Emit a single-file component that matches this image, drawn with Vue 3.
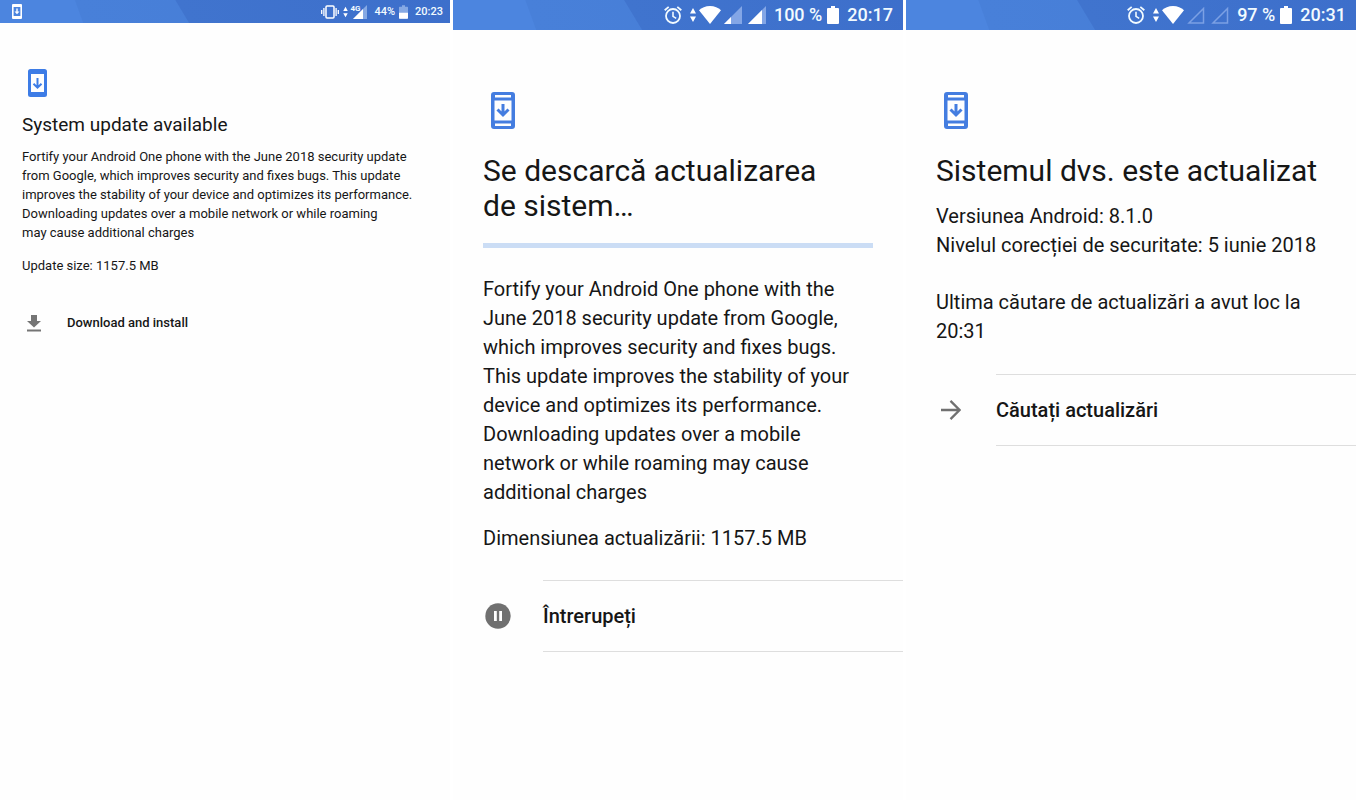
<script setup>
const screens = [
  {
    id: 'available',
    lang: 'en',
    compact: true,
    battery: '44%',
    time: '20:23',
    title: ['System update available'],
    paragraphs: [
      [
        'Fortify your Android One phone with the June 2018 security update',
        'from Google, which improves security and fixes bugs. This update',
        'improves the stability of your device and optimizes its performance.',
        'Downloading updates over a mobile network or while roaming',
        'may cause additional charges',
      ],
      ['Update size: 1157.5 MB'],
    ],
    action: 'Download and install',
    icon: 'download',
  },
  {
    id: 'downloading',
    lang: 'ro',
    battery: '100 %',
    time: '20:17',
    signal: 'partial',
    title: ['Se descarcă actualizarea', 'de sistem…'],
    progress: true,
    paragraphs: [
      [
        'Fortify your Android One phone with the',
        'June 2018 security update from Google,',
        'which improves security and fixes bugs.',
        'This update improves the stability of your',
        'device and optimizes its performance.',
        'Downloading updates over a mobile',
        'network or while roaming may cause',
        'additional charges',
      ],
      ['Dimensiunea actualizării: 1157.5 MB'],
    ],
    action: 'Întrerupeți',
    icon: 'pause',
  },
  {
    id: 'updated',
    lang: 'ro',
    battery: '97 %',
    time: '20:31',
    signal: 'empty',
    title: ['Sistemul dvs. este actualizat'],
    paragraphs: [
      ['Versiunea Android: 8.1.0', 'Nivelul corecției de securitate: 5 iunie 2018'],
      ['Ultima căutare de actualizări a avut loc la', '20:31'],
    ],
    action: 'Căutați actualizări',
    icon: 'arrow',
  },
]
</script>

<template>
  <main class="screens">
    <section v-for="s in screens" :key="s.id" :lang="s.lang" class="screen" :class="[s.id, { compact: s.compact }]">
      <header class="status">
        <template v-if="s.compact">
          <svg class="notice" viewBox="0 0 10 15" aria-hidden="true">
            <path fill="#fff" fill-rule="evenodd" d="M1 0h8a1 1 0 0 1 1 1v13a1 1 0 0 1-1 1H1a1 1 0 0 1-1-1V1a1 1 0 0 1 1-1zM1.6 3v9h6.8V3z" />
            <path fill="#fff" d="M4.3 4.5h1.4v3h1.8L5 10.2 2.5 7.5h1.8z" />
          </svg>
          <svg class="vibrate" viewBox="0 0 18 14" aria-hidden="true">
            <rect x="5" y="1" width="8" height="12" rx="1" fill="none" stroke="#fff" stroke-width="1.5" />
            <path d="M2.9 3v8M.7 5v4M15.1 3v8M17.3 5v4" stroke="#fff" stroke-width="1.3" />
          </svg>
          <svg class="traffic" viewBox="0 0 6 16" aria-hidden="true">
            <path fill="#fff" d="M0 6.5 3 1l3 5.5zM0 9.5h6L3 15z" />
          </svg>
          <span class="network">
            <svg viewBox="0 0 17 14" aria-hidden="true">
              <path fill="#86a9e4" d="M17 0v14H3z" />
              <path fill="#fff" d="M13 4v10H3z" />
            </svg>
            <span class="generation">4G</span>
          </span>
        </template>
        <template v-else>
          <svg class="alarm" viewBox="0 0 18 18" aria-hidden="true" fill="none" stroke="#f2fbff">
            <circle cx="9" cy="10" r="7" stroke-width="1.8" />
            <path d="M9 5.8V10.4l3.2 2" stroke-width="1.6" />
            <path d="M.7 4.3 4.7.9M17.3 4.3 13.3.9" stroke-width="1.8" />
          </svg>
          <svg class="traffic" viewBox="0 0 6 16" aria-hidden="true">
            <path fill="#fff" d="M0 6.5 3 1l3 5.5zM0 9.5h6L3 15z" />
          </svg>
          <svg class="wifi" viewBox="0 0 22 18" aria-hidden="true">
            <path fill="#fff" d="M11 18 0 4.2C2.7 1.8 6.5 0 11 0s8.3 1.8 11 4.2z" />
          </svg>
          <svg v-for="n in 2" :key="n" class="signal" viewBox="0 0 18 18" aria-hidden="true">
            <path v-if="s.signal === 'empty'" d="M16.5 2.5v14.500H2z" fill="none" stroke="#7ba0e4" stroke-width="1.5" />
            <template v-else>
              <path fill="#83a6e6" d="M18 0v18H0z" />
              <path fill="#fff" :d="n === 1 ? 'M7 11v7H0z' : 'M14 4v14H0z'" />
            </template>
          </svg>
        </template>
        <span class="level">{{ s.battery }}</span>
        <svg class="battery" viewBox="0 0 12 18" aria-hidden="true">
          <path :fill="s.compact ? '#86a9e4' : '#fff'" d="M4 0h4v2h3a1 1 0 0 1 1 1v14a1 1 0 0 1-1 1H1a1 1 0 0 1-1-1V3a1 1 0 0 1 1-1h3z" />
          <path v-if="s.compact" fill="#fff" d="M0 10h12v7a1 1 0 0 1-1 1H1a1 1 0 0 1-1-1z" />
        </svg>
        <time>{{ s.time }}</time>
      </header>

      <div class="content">
        <svg v-if="s.compact" class="device" viewBox="0 0 19 28" aria-hidden="true">
          <path fill="#3d7ce6" fill-rule="evenodd" d="M2.5 0h14A2.5 2.5 0 0 1 19 2.5v23a2.5 2.5 0 0 1-2.5 2.5h-14A2.5 2.5 0 0 1 0 25.5v-23A2.5 2.5 0 0 1 2.5 0zM3 5v18h13V5z" />
          <path fill="none" stroke="#3d7ce6" stroke-width="2" d="M9.5 9v10M5.5 14.7l4 4 4-4" />
        </svg>
        <svg v-else class="device" viewBox="0 0 24 37" aria-hidden="true">
          <path fill="#447de0" fill-rule="evenodd" d="M3 0h18a3 3 0 0 1 3 3v31a3 3 0 0 1-3 3H3a3 3 0 0 1-3-3V3a3 3 0 0 1 3-3zM4 3v2.500h16V3zM3.500 8.500v20h17v-20zM4 31.500V34h16v-2.500z" />
          <path fill="none" stroke="#447de0" stroke-width="3" d="M12 12v11M6.5 17.500l5.500 5.500 5.500-5.500" />
        </svg>

        <h1><template v-for="(line, i) in s.title" :key="line"><br v-if="i">{{ line }}</template></h1>
        <div v-if="s.progress" class="progress" role="progressbar" :aria-label="s.title.join(' ')"></div>
        <p v-for="p in s.paragraphs" :key="p[0]"><template v-for="(line, i) in p" :key="line"><br v-if="i">{{ line }}</template></p>
      </div>

      <button type="button" class="action">
        <span class="symbol">
          <svg v-if="s.icon === 'download'" width="14" height="17" viewBox="0 0 14 17" aria-hidden="true">
            <path fill="#757575" d="M4 0h6v6h4l-7 6.5L0 6h4zM0 14.5h14v2H0z" />
          </svg>
          <svg v-else-if="s.icon === 'pause'" width="26" height="26" viewBox="0 0 26 26" aria-hidden="true">
            <circle cx="13" cy="13" r="12.7" fill="#707070" />
            <path fill="#fff" d="M9 8h2.800v10H9zM14.200 8H17v10h-2.800z" />
          </svg>
          <svg v-else width="20" height="20" viewBox="0 0 20 20" aria-hidden="true">
            <path fill="none" stroke="#707070" stroke-width="2.3" d="M0 10h18.500M9.500.9 18.600 10l-9.100 9.100" />
          </svg>
        </span>
        <span class="label">{{ s.action }}</span>
      </button>
    </section>
  </main>
</template>

<style>
body {
  margin: 0;
  background: #fff;
}
</style>

<style scoped>
.screens {
  display: grid;
  grid-template-columns: repeat(3, minmax(0, 1fr));
  gap: 3px;
  min-height: 100vh;
  font-family: Roboto, "Noto Sans", sans-serif;
  color: #161616;
}

.screen {
  background: #fefefe;
  overflow: hidden;
}

.status {
  display: flex;
  align-items: center;
  justify-content: flex-end;
  box-sizing: border-box;
  height: 30px;
  padding-right: 10px;
  color: #f2fbff;
  font-size: 18px;
  font-weight: 500;
  line-height: 30px;
  white-space: nowrap;
  background:
    linear-gradient(59deg, transparent 15px, #4074ce 16px, #3d6fcb 100%) 100% 0 / 62% 100% no-repeat,
    linear-gradient(70deg, transparent 10px, #4880d9 11px, #467cd5 100%) 100% 0 / 84% 100% no-repeat,
    #4c85df;
}

.status svg {
  flex: none;
  display: block;
}

.alarm {
  width: 18px;
  height: 18px;
  margin-right: 8px;
}

.traffic {
  width: 6px;
  height: 16px;
  margin-right: 3px;
}

.wifi {
  width: 22px;
  height: 18px;
  margin-right: 3px;
}

.signal {
  width: 18px;
  height: 18px;
  margin-right: 6px;
}

.level {
  margin-left: 2px;
}

.battery {
  width: 12px;
  height: 18px;
  margin: 0 8px 0 5px;
}

.content {
  padding: 62px 30px 0;
}

.device {
  display: block;
  width: 24px;
  height: 37px;
  margin-left: 8px;
}

h1 {
  margin: 24px 0 0;
  font-size: 30px;
  font-weight: 400;
  line-height: 35px;
  white-space: nowrap;
}

.progress {
  height: 5px;
  margin: 20px 0 27px;
  background: #cbddf5;
}

p {
  margin: 0 0 17px;
  font-size: 20px;
  line-height: 29px;
  white-space: nowrap;
}

.updated h1 {
  margin-bottom: 14px;
}

.updated p {
  margin-bottom: 28px;
}

.action {
  display: flex;
  width: 100%;
  margin: 0;
  padding: 0 0 0 30px;
  border: 0;
  background: none;
  color: #161616;
  font-family: inherit;
  font-size: 20px;
  font-weight: 500;
  line-height: 70px;
  text-align: left;
  cursor: pointer;
}

.downloading .action {
  margin-top: 27px;
}

.symbol {
  display: flex;
  align-items: center;
  justify-content: center;
  flex: none;
  width: 30px;
  margin-right: 30px;
}

.label {
  flex: 1;
  border-top: 1px solid #dedede;
  border-bottom: 1px solid #dedede;
}

.compact .status {
  height: 23px;
  padding-right: 7px;
  font-size: 11px;
  line-height: 23px;
}

.notice {
  width: 10px;
  height: 15px;
  margin: 0 auto 0 12px;
}

.vibrate {
  width: 18px;
  height: 14px;
  margin-right: 4px;
}

.compact .traffic {
  width: 5px;
  height: 12px;
  margin-right: 2px;
}

.network {
  position: relative;
  width: 17px;
  height: 14px;
  margin-right: 5px;
}

.network svg {
  width: 17px;
  height: 14px;
}

.generation {
  position: absolute;
  top: 0;
  left: 0;
  font-size: 8px;
  font-weight: 700;
  line-height: 8px;
}

.compact .battery {
  width: 9px;
  height: 14px;
  margin: 0 7px 0 4px;
}

.compact .level {
  margin-left: 2px;
}

.compact .content {
  padding: 46px 22px 0;
}

.compact .device {
  width: 19px;
  height: 28px;
  margin-left: 6px;
}

.compact h1 {
  margin: 16px 0 10px;
  font-size: 19px;
  line-height: 24px;
}

.compact p {
  margin-bottom: 14px;
  font-size: 13px;
  line-height: 19px;
}

.compact .action {
  margin-top: 30px;
  padding-left: 22px;
  font-size: 13px;
  line-height: 36px;
}

.compact .symbol {
  width: 23px;
  margin-right: 22px;
}

.compact .label {
  border: 0;
}
</style>
